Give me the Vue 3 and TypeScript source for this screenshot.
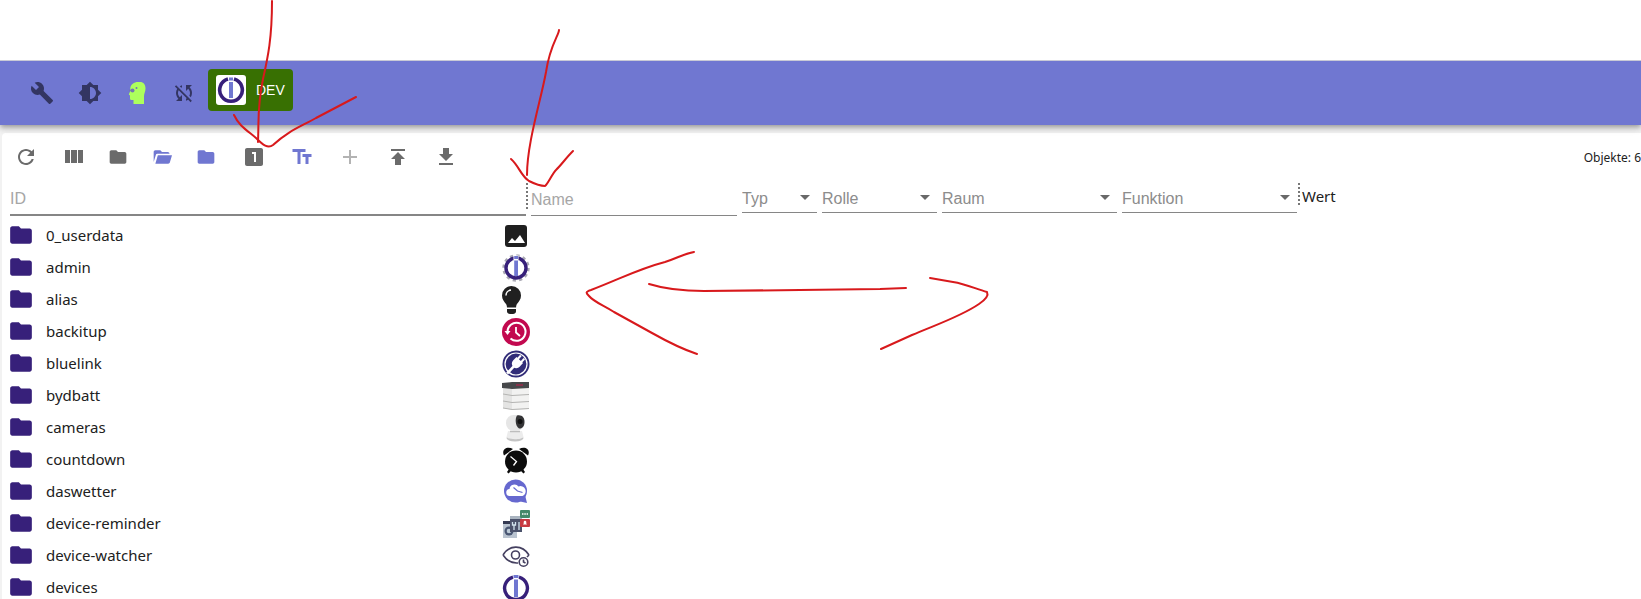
<script setup lang="ts">
import { ref } from 'vue'

interface Tool {
  label: string
  path: string
  kind?: string
}

interface Row {
  id: string
  icon: string
}

const folder = 'M10 4H4c-1.1 0-2 .9-2 2v12c0 1.1.9 2 2 2h16c1.1 0 2-.9 2-2V8c0-1.1-.9-2-2-2h-8l-2-2z'
const openFolder = 'M2 18V6c0-1.100.9-2 2-2h6l2 2h7c1.100 0 2 .9 2 2H6.300c-.8 0-1.300.400-1.500 1.100L2 18zM7 10h17l-2.600 8.600c-.3.900-1 1.400-1.900 1.400H4L7 10z'

const tools: Tool[] = [
  { label: 'Refresh', path: 'M17.65 6.35C16.2 4.9 14.21 4 12 4c-4.42 0-7.99 3.58-7.99 8s3.57 8 7.99 8c3.73 0 6.84-2.55 7.73-6h-2.08c-.82 2.33-3.04 4-5.65 4-3.31 0-6-2.69-6-6s2.69-6 6-6c1.66 0 3.14.69 4.22 1.78L13 11h7V4l-2.35 2.35z' },
  { label: 'Columns', path: 'M9 18h6V5H9v13zm-6 0h5V5H3v13zM16 5v13h5V5h-5z', kind: 'columns' },
  { label: 'Collapse all', path: folder, kind: 'small' },
  { label: 'Expand all', path: openFolder, kind: 'small accent' },
  { label: 'Expand one level', path: folder, kind: 'small accent' },
  { label: 'Level', path: 'M19 3H5c-1.1 0-2 .9-2 2v14c0 1.1.9 2 2 2h14c1.1 0 2-.9 2-2V5c0-1.1-.9-2-2-2zm-5 14h-2V9h-2V7h4v10z', kind: 'level' },
  { label: 'Text size', path: 'M2.5 4v3h5v12h3V7h5V4h-13zm19 5h-9v3h3v7h3v-7h3V9z', kind: 'accent' },
  { label: 'Add', path: 'M19 13h-6v6h-2v-6H5v-2h6V5h2v6h6v2z', kind: 'faded' },
  { label: 'Upload', path: 'M5 4v2h14V4H5zm0 10h4v6h6v-6h4l-7-7-7 7z' },
  { label: 'Download', path: 'M19 9h-4V3H9v6H5l7 7 7-7zM5 18v2h14v-2H5z' },
]

const selects = ['Typ', 'Rolle', 'Raum', 'Funktion']

const rows: Row[] = [
  { id: '0_userdata', icon: 'image' },
  { id: 'admin', icon: 'admin' },
  { id: 'alias', icon: 'bulb' },
  { id: 'backitup', icon: 'backup' },
  { id: 'bluelink', icon: 'plug' },
  { id: 'bydbatt', icon: 'battery' },
  { id: 'cameras', icon: 'camera' },
  { id: 'countdown', icon: 'clock' },
  { id: 'daswetter', icon: 'weather' },
  { id: 'device-reminder', icon: 'reminder' },
  { id: 'device-watcher', icon: 'watcher' },
  { id: 'devices', icon: 'logo' },
]

const idFilter = ref('')
const nameFilter = ref('')
</script>

<template>
  <div class="page">
    <header class="bar">
      <button class="bar-btn" aria-label="Settings">
        <svg viewBox="0 0 24 24"><path d="M22.700 19l-9.100-9.100c.9-2.300.4-5-1.500-6.900-2-2-5-2.400-7.400-1.300L9 6 6 9 1.600 4.700C.4 7.100.9 10.100 2.900 12.100c1.900 1.900 4.600 2.400 6.900 1.500l9.100 9.100c.4.4 1 .4 1.400 0l2.300-2.300c.5-.4.5-1.100.1-1.400z" /></svg>
      </button>
      <button class="bar-btn" aria-label="Theme">
        <svg viewBox="0 0 24 24"><path d="M20 15.310L23.310 12 20 8.690V4h-4.690L12 .690 8.690 4H4v4.690L.690 12 4 15.310V20h4.690L12 23.310 15.310 20H20v-4.690zM12 18V6c3.310 0 6 2.690 6 6s-2.690 6-6 6z" /></svg>
      </button>
      <button class="bar-btn expert" aria-label="Expert mode">
        <svg viewBox="0 0 24 24">
          <path d="M12 1h2c3.500 0 5.500 2.500 5.500 6.500 0 3.500-1.500 4.500-1.500 8V23H7.500v-4H5.500c-1 0-1.500-.6-1.500-1.500v-3L2.800 13.500 4.300 10V7C4.800 3.500 8 1 12 1z" />
          <g class="gears"><circle cx="6.500" cy="9.500" r="2" /><circle cx="10.500" cy="7" r="1" /><circle cx="3.800" cy="9.500" r="1" /></g>
        </svg>
      </button>
      <button class="bar-btn sync" aria-label="Sync disabled">
        <svg viewBox="0 0 24 24"><path d="M10 6.350V4.260c-.8.210-1.550.540-2.230.960l1.460 1.460c.250-.120.500-.240.770-.330zm-7.140-.940l2.360 2.360C4.450 8.990 4 10.440 4 12c0 2.210.910 4.200 2.360 5.640L4 20h6v-6l-2.240 2.240C6.680 15.150 6 13.660 6 12c0-1 .250-1.940.680-2.770l8.080 8.080c-.250.130-.5.250-.770.340v2.090c.8-.210 1.550-.540 2.230-.960l2.360 2.360 1.270-1.270L4.140 4.140 2.860 5.410zM20 4h-6v6l2.240-2.240C17.320 8.850 18 10.340 18 12c0 1-.250 1.940-.680 2.770l1.460 1.460C19.550 15.010 20 13.560 20 12c0-2.210-.910-4.200-2.360-5.640L20 4z" /></svg>
      </button>
      <button class="host">
        <span class="host-logo">
          <svg viewBox="0 0 28 28">
            <path d="M11 3.100A11.300 11.300 0 1 0 17 3.100" fill="none" stroke="#37207a" stroke-width="3.600" />
            <path d="M12 6h4v16h-4zM12 1.500h4v3h-4z" fill="#7077d1" />
          </svg>
        </span>
        <span>DEV</span>
      </button>
    </header>

    <main class="paper">
      <div class="toolbar">
        <button v-for="tool in tools" :key="tool.label" class="tool" :class="tool.kind" :aria-label="tool.label">
          <svg viewBox="0 0 24 24"><path :d="tool.path" /></svg>
        </button>
        <span class="count">Objekte: 6</span>
      </div>

      <table class="objects">
        <colgroup>
          <col class="c-id"><col class="c-name"><col class="c-typ"><col class="c-rolle"><col class="c-raum"><col class="c-funktion"><col>
        </colgroup>
        <thead>
          <tr>
            <th class="th-id"><input v-model="idFilter" class="id-input" aria-label="ID" placeholder="ID"></th>
            <th class="th-name"><input v-model="nameFilter" class="name-input" aria-label="Name" placeholder="Name"></th>
            <th v-for="s in selects" :key="s" :class="{ last: s === 'Funktion' }">
              <span class="select-wrap">
                <select :aria-label="s"><option>{{ s }}</option></select>
                <svg class="caret" viewBox="0 0 24 24"><path d="M7 10l5 5 5-5z" /></svg>
              </span>
            </th>
            <th class="th-value">Wert</th>
          </tr>
        </thead>
        <tbody>
          <tr v-for="row in rows" :key="row.id">
            <td>
              <div class="object">
                <svg class="folder" viewBox="0 0 24 24"><path :d="folder" /></svg>
                <span class="name">{{ row.id }}</span>
              </div>
            </td>
            <td class="td-icon" colspan="6">
              <svg class="row-icon" viewBox="0 0 28 28">
                <g v-if="row.icon === 'image'">
                  <rect x="3" y="3" width="22" height="22" rx="3" fill="#1f1f1f" />
                  <path d="M6 21l4-5 3 3 5-6 5 8z" fill="#fff" />
                </g>
                <g v-else-if="row.icon === 'admin'" fill="none">
                  <circle cx="14" cy="14" r="12.300" stroke="#aaa9b4" stroke-width="2.800" stroke-dasharray="3.200 3.240" />
                  <circle cx="14" cy="14" r="10" fill="#fff" stroke="#37207a" stroke-width="3.400" />
                  <path d="M11.500 1.500h5v4.500h-5z" fill="#fff" />
                  <path d="M12.200 6.500h3.800V22h-3.800zM12.200 2h3.800v3h-3.800z" fill="#7077d1" />
                </g>
                <g v-else-if="row.icon === 'bulb'">
                  <path d="M9.500 0a9.500 9.500 0 0 1 9.500 9.500c0 4-2.200 6-4 8.500-.7 1-.9 2.500-.9 3.500H5c0-1-.3-2.500-1-3.500C2.200 15.500 0 13.500 0 9.500A9.500 9.500 0 0 1 9.500 0zM5 23h9v2.500C14 27 12.500 28 11 28H8c-1.500 0-3-1-3-2.500z" fill="#202020" />
                  <path d="M4 9.500a5.500 5.500 0 0 1 5-5.500" fill="none" stroke="#fff" stroke-width="1.500" />
                </g>
                <g v-else-if="row.icon === 'backup'" fill="none" stroke="#fff">
                  <circle cx="14" cy="14" r="14" fill="#c2094f" stroke="none" />
                  <path d="M5.500 14a9 9 0 1 1 3 6.500" stroke-width="2" />
                  <path d="M2.500 13h6L5.500 17z" fill="#fff" stroke="none" />
                  <path d="M14 9v5.500l4 3.500" stroke-width="1.800" />
                </g>
                <g v-else-if="row.icon === 'plug'">
                  <circle cx="14" cy="14" r="13.500" fill="#312c78" />
                  <circle cx="14" cy="14" r="11" fill="none" stroke="#fff" stroke-width="1.200" />
                  <g transform="rotate(43 14 14)" fill="#fff">
                    <path d="M9.500 8.500h9v5a4.500 4.500 0 0 1-9 0zM10.800 4.500h2v5h-2zM15.500 4.500h2v5h-2zM12.700 17h2.600v10h-2.600z" />
                  </g>
                </g>
                <g v-else-if="row.icon === 'battery'">
                  <path d="M1 3h26v24l-17 1-9-2z" fill="#e4e4e3" />
                  <path d="M10 4h17v23l-17 1z" fill="#f2f2f1" />
                  <path d="M0 1l10-1h17v6l-17 1-10-1z" fill="#46484a" />
                  <path d="M14 3h7" stroke="#9c2b4b" stroke-width="1.500" />
                  <path d="M1 12l9 1.500 17-1M1 19l9 1.500 17-1M1 26l9 1.500 17-1" fill="none" stroke="#b4b4b2" />
                </g>
                <g v-else-if="row.icon === 'camera'">
                  <ellipse cx="13" cy="24" rx="8.500" ry="3.500" fill="#c4c4c4" />
                  <path d="M6 17h14l1.500 6c-2 3-15 3-17 0z" fill="#ececec" />
                  <path d="M8 17.500h10" stroke="#bdbdbd" stroke-width="1.500" />
                  <rect x="4" y="1" width="18" height="16" rx="7.500" fill="#e6e6e6" />
                  <path d="M15 1.500c5-1 7.500 2 7.500 6.500s-2.500 7-5.500 6.500c-4-2.500-4-10.500-2-13z" fill="#343436" />
                  <circle cx="18" cy="7.500" r="2.500" fill="#111" />
                </g>
                <g v-else-if="row.icon === 'clock'" fill="#0c0c0c">
                  <circle cx="14" cy="15.500" r="11" />
                  <path d="M2 9.500C-1 3.500 5-.5 11 3zM26 9.500c3-6-3-10-9-6.500zM7 23l2 2-2.500 2.500-1.500-1.500zM21 23l-2 2 2.500 2.500 1.500-1.500z" />
                  <path d="M8.500 10.500l6 5-3 4" fill="none" stroke="#fff" stroke-width="1.300" />
                </g>
                <g v-else-if="row.icon === 'weather'">
                  <circle cx="13.500" cy="13" r="11.500" fill="#6668cf" />
                  <path d="M16 23l9 2-2-8z" fill="#6668cf" />
                  <path d="M8 18a3.500 3.500 0 0 1-.5-7 5 5 0 0 1 9-2.500 4.300 4.300 0 0 1 4 9.500z" fill="#fff" />
                  <path d="M11.500 9.500l4 3.500 5 1.500" fill="none" stroke="#6668cf" stroke-width="1.200" />
                </g>
                <g v-else-if="row.icon === 'reminder'">
                  <rect x="1" y="12" width="14" height="16" fill="#b9c3cf" />
                  <path d="M1 11h7v3H1z" fill="#353a52" />
                  <circle cx="7" cy="21" r="4.500" fill="#495672" />
                  <circle cx="7" cy="21" r="2.300" fill="#bccad6" />
                  <rect x="8" y="6" width="12" height="16" fill="#4b526b" />
                  <rect x="8" y="6" width="12" height="3" fill="#aab4c0" />
                  <path d="M10.500 12v3h3v-3M12 15v5M17 12v8" fill="none" stroke="#d2e4ee" stroke-width="1.300" />
                  <rect x="18" y="0" width="10" height="8" rx="1" fill="#45896a" />
                  <path d="M20 4h6" stroke="#fff" stroke-width="1.500" stroke-dasharray="1.500 .8" />
                  <rect x="18" y="9" width="10" height="8" rx="1" fill="#c73a42" />
                  <path d="M21 14.500h4l-.7-1V12a1.300 1.300 0 0 0-2.600 0v1.500z" fill="#fff" />
                </g>
                <g v-else-if="row.icon === 'watcher'" fill="none" stroke="#454060" stroke-width="1.600">
                  <path d="M1 13C7 3 20 2 27 13M1 13c4 6 9 8.500 15 8M27 13l-2 2" />
                  <circle cx="13.500" cy="13" r="4" />
                  <circle cx="21.500" cy="20" r="4.300" />
                  <path d="M21.500 17.500V20l2 1" />
                </g>
                <g v-else>
                  <path d="M11 3.100A11.400 11.400 0 1 0 17 3.100" fill="none" stroke="#37207a" stroke-width="3.400" />
                  <path d="M12 5.500h4V23h-4zM11.500 1h5v3h-5z" fill="#7077d1" />
                </g>
              </svg>
            </td>
          </tr>
        </tbody>
      </table>
    </main>

    <svg class="ink" aria-hidden="true">
      <path d="M272 1C272 38 268 57 263 79C257 108 259 119 258 142" />
      <path d="M234 115C239 126 248 131 256 138C263 145 268 149 273 145C288 131 300 127 316 118L356 97" />
      <path d="M559 30C559 35 550 45 546 72C541 100 527 143 527 175" />
      <path d="M511 159C519 166 521 176 529 181C535 184 541 186 545 186C548 184 552 174 556 170C562 164 566 158 573 151" />
      <path d="M694 252C683 254 678 258 665 262C638 269 620 279 591 290C585 292 586 293 589 296C594 302 603 305 614 312L652 333C668 342 682 349 697 354" />
      <path d="M649 284C665 289 679 291 704 291L800 290L880 289L906 288" />
      <path d="M930 278L953 282C966 284 976 289 987 292C989 296 985 300 979 304C960 317 935 325 912 335L881 349" />
    </svg>
  </div>
</template>

<style>
body {
  margin: 0;
}
</style>

<style scoped>
.page {
  position: relative;
  box-sizing: border-box;
  height: 100vh;
  padding-top: 60px;
  overflow: hidden;
  display: flex;
  flex-direction: column;
  background: linear-gradient(#fff 60px, #f2f2f2 60px);
  font-family: "Noto Sans", "Open Sans", sans-serif;
  color: #212121;
}

button {
  border: 0;
  padding: 0;
  background: none;
  display: flex;
  align-items: center;
  justify-content: center;
  flex: none;
  cursor: pointer;
}

.bar {
  display: flex;
  align-items: center;
  flex: none;
  height: 64px;
  padding-left: 18px;
  border-top: 1px solid #c9cad6;
  background: #7077d1;
  box-shadow: 0 2px 4px -1px rgba(0, 0, 0, 0.2), 0 4px 5px 0 rgba(0, 0, 0, 0.14), 0 1px 10px 0 rgba(0, 0, 0, 0.12);
  clip-path: inset(0 0 -16px 0);
}

.bar-btn {
  width: 48px;
  height: 48px;
}

.bar-btn svg {
  width: 24px;
  height: 24px;
  fill: #333562;
}

.bar-btn.expert svg {
  fill: #adff5c;
}

.bar-btn .gears {
  fill: #7077b4;
}

.bar-btn.sync {
  width: 44px;
  margin-right: 2px;
}

.host {
  align-self: flex-start;
  gap: 10px;
  height: 42px;
  margin-top: 8px;
  padding: 0 8px;
  border-radius: 4px;
  background: #387002;
  color: #fff;
  font: 14px "Liberation Sans", Arial, sans-serif;
}

.host-logo {
  display: flex;
  padding: 1px;
  border-radius: 3px;
  background: #fff;
}

.host-logo svg {
  width: 28px;
  height: 28px;
}

.paper {
  flex: 1;
  min-height: 0;
  margin: 8px 0 0 2px;
  border-radius: 4px 0 0 0;
  background: #fff;
}

.toolbar {
  display: flex;
  align-items: center;
  height: 48px;
}

.tool {
  width: 48px;
  height: 48px;
}

.tool svg {
  width: 24px;
  height: 24px;
  fill: #6b6b6b;
}

.tool.small {
  width: 44px;
}

.tool.columns + .tool.small {
  margin-left: -2px;
}

.tool.small svg {
  width: 20px;
  height: 20px;
}

.tool.accent svg {
  fill: #7077d1;
}

.tool.level {
  margin-left: 2px;
}

.tool.faded svg {
  fill: #b3b3b3;
}

.count {
  margin-left: auto;
  font-size: 12px;
}

.objects {
  width: calc(100% - 8px);
  margin-left: 8px;
  table-layout: fixed;
  border-collapse: collapse;
}

.c-id {
  width: 516px;
}

.c-name {
  width: 216px;
}

.c-typ {
  width: 80px;
}

.c-rolle {
  width: 120px;
}

.c-raum {
  width: 180px;
}

.c-funktion {
  width: 176px;
}

th {
  box-sizing: border-box;
  height: 38px;
  padding: 0 5px 0 0;
  vertical-align: top;
  text-align: left;
  font-size: 15px;
  font-weight: 400;
}

th.last {
  padding-right: 1px;
}

th.th-id {
  padding: 0;
}

th.th-name {
  padding-left: 5px;
  background: repeating-linear-gradient(#777 0 2px, transparent 2px 4px) 0 2px / 2px 28px no-repeat;
}

th.th-value {
  padding: 5px 0 0 4px;
  background: repeating-linear-gradient(#777 0 2px, transparent 2px 4px) 0 2px / 2px 22px no-repeat;
}

input,
select {
  display: block;
  box-sizing: border-box;
  width: 100%;
  margin: 0;
  padding: 3px 0 0;
  border: 0;
  border-bottom: 1px solid #868686;
  border-radius: 0;
  outline: 0;
  background: none;
  appearance: none;
  color: #8c8c8c;
  font: 16px "Liberation Sans", Arial, sans-serif;
}

input::placeholder {
  color: #a6a6a6;
  opacity: 1;
}

.id-input {
  height: 35px;
  border-bottom-width: 2px;
}

.name-input {
  height: 35px;
}

.select-wrap {
  position: relative;
  display: block;
}

select {
  height: 32px;
}

.caret {
  position: absolute;
  top: 4px;
  right: 0;
  width: 24px;
  height: 24px;
  fill: #686868;
  pointer-events: none;
}

tbody td {
  height: 32px;
  padding: 0;
}

.object {
  display: flex;
  align-items: center;
  gap: 12px;
  height: 32px;
}

.folder {
  width: 26px;
  height: 26px;
  margin-left: -2px;
  fill: #37207a;
}

.name {
  font-size: 15px;
}

.td-icon {
  position: relative;
}

.row-icon {
  position: absolute;
  top: 3px;
  left: -24px;
  width: 28px;
  height: 28px;
}

.ink {
  position: absolute;
  inset: 0;
  width: 100%;
  height: 100%;
  pointer-events: none;
  fill: none;
  stroke: #d8191c;
  stroke-width: 2;
  stroke-linecap: round;
  stroke-linejoin: round;
}
</style>
